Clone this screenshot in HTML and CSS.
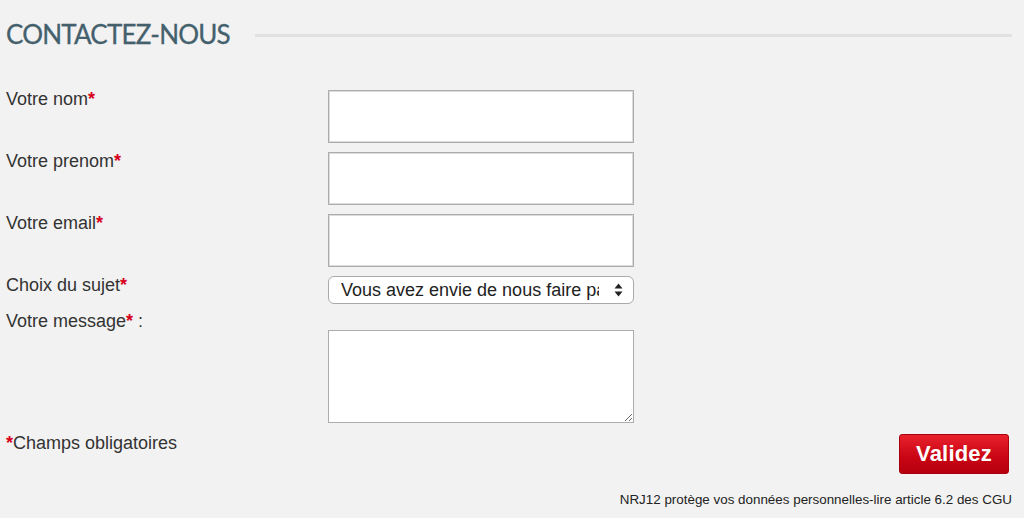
FILE: index.html
```html
<!DOCTYPE html>
<html lang="fr">
<head>
<meta charset="utf-8">
<title>Contactez-nous</title>
<link rel="stylesheet" href="styles.css">
</head>
<body>
<div class="page">
  <div class="heading">
    <h1 class="title">CONTACTEZ-NOUS</h1>
    <span class="rule"></span>
  </div>
  <form class="form">
    <div class="row row-field">
      <label class="label">Votre nom<span class="req">*</span></label>
      <input class="input" type="text">
    </div>
    <div class="row row-field">
      <label class="label">Votre prenom<span class="req">*</span></label>
      <input class="input" type="text">
    </div>
    <div class="row row-field">
      <label class="label">Votre email<span class="req">*</span></label>
      <input class="input" type="text">
    </div>
    <div class="row row-select">
      <label class="label">Choix du sujet<span class="req">*</span></label>
      <div class="select-wrap">
        <select class="select">
          <option>Vous avez envie de nous faire partager quelque chose</option>
        </select>
        <svg class="arrows" width="9" height="14" viewBox="0 0 9 14"><path d="M4.5 0.5 L8.5 5.5 H0.5 Z M0.5 8.5 H8.5 L4.5 13.5 Z" fill="#222"/></svg>
      </div>
    </div>
    <div class="row row-msg">
      <label class="label">Votre message<span class="req">*</span> :</label>
    </div>
    <div class="row row-area">
      <span class="label"></span>
      <textarea class="textarea"></textarea>
    </div>
    <div class="row row-submit">
      <p class="note"><span class="req">*</span>Champs obligatoires</p>
      <button class="btn" type="button">Validez</button>
    </div>
    <p class="legal">NRJ12 protège vos données personnelles-lire article 6.2 des CGU</p>
  </form>
</div>
</body>
</html>
```
FILE: styles.css
```css
html, body {
  margin: 0;
  padding: 0;
  background: #f2f2f2;
}
body {
  font-family: "Liberation Sans", Arial, sans-serif;
  color: #333;
}
.page {
  width: 1024px;
  height: 518px;
  overflow: hidden;
}
.heading {
  display: flex;
  align-items: center;
  padding: 17px 12px 0 6px;
  height: 35px;
}
.title {
  margin: 0;
  font-family: "Lato", sans-serif;
  font-weight: 400;
  font-size: 26px;
  line-height: 35px;
  color: #44606c;
  letter-spacing: -0.8px;
  white-space: nowrap;
  -webkit-text-stroke: 0.3px #44606c;
}
.rule {
  flex: 1;
  height: 3px;
  background: #e1e1e1;
  margin-left: 25px;
  margin-top: 1px;
}
.form {
  padding: 38px 12px 0 6px;
}
.row {
  display: flex;
  align-items: flex-start;
}
.label {
  width: 322px;
  flex: none;
  font-size: 18px;
  line-height: 18px;
  color: #333;
}
.req {
  color: #d8001a;
  font-weight: bold;
}
.row-field {
  margin-bottom: 9px;
}
.row-field + .row-select {
  margin-top: 2px;
}
.input {
  width: 306px;
  height: 53px;
  box-sizing: border-box;
  margin: 0;
  border: 1px solid #acacac;
  background: #fff;
  box-shadow: inset 0 0 0 1px #dcdcdc;
}
.select-wrap {
  position: relative;
  width: 306px;
  height: 28px;
}
.select {
  -webkit-appearance: none;
  appearance: none;
  width: 306px;
  height: 28px;
  box-sizing: border-box;
  margin: 0;
  border: 1px solid #aaa;
  border-radius: 6px;
  background: #fff;
  font-family: "Liberation Sans", Arial, sans-serif;
  font-size: 18px;
  color: #222;
  padding: 0 34px 0 12px;
}
.arrows {
  position: absolute;
  right: 11px;
  top: 7px;
}
.row-select {
  margin-bottom: 8px;
}
.row-msg .label {
  line-height: 18px;
  height: 18px;
}
.textarea {
  width: 306px;
  height: 93px;
  box-sizing: border-box;
  margin: 0;
  border: 1px solid #acacac;
  background: #fff;
  resize: both;
  display: block;
}
.row-submit {
  justify-content: space-between;
  margin-top: 11px;
}
.note {
  margin: 0;
  font-size: 18px;
  line-height: 18px;
}
.btn {
  width: 110px;
  height: 40px;
  margin: 0 3px 0 0;
  border: 1px solid #a8000c;
  border-radius: 3px;
  background: linear-gradient(#e8212c, #c90514 60%, #b6000d);
  color: #fff;
  font-family: "Liberation Sans", Arial, sans-serif;
  font-weight: bold;
  font-size: 22px;
  letter-spacing: 0.2px;
  padding: 0;
  text-align: center;
}
.legal {
  margin: 18px 0 0 0;
  text-align: right;
  font-size: 13.4px;
  line-height: 16px;
  color: #222;
}
```
